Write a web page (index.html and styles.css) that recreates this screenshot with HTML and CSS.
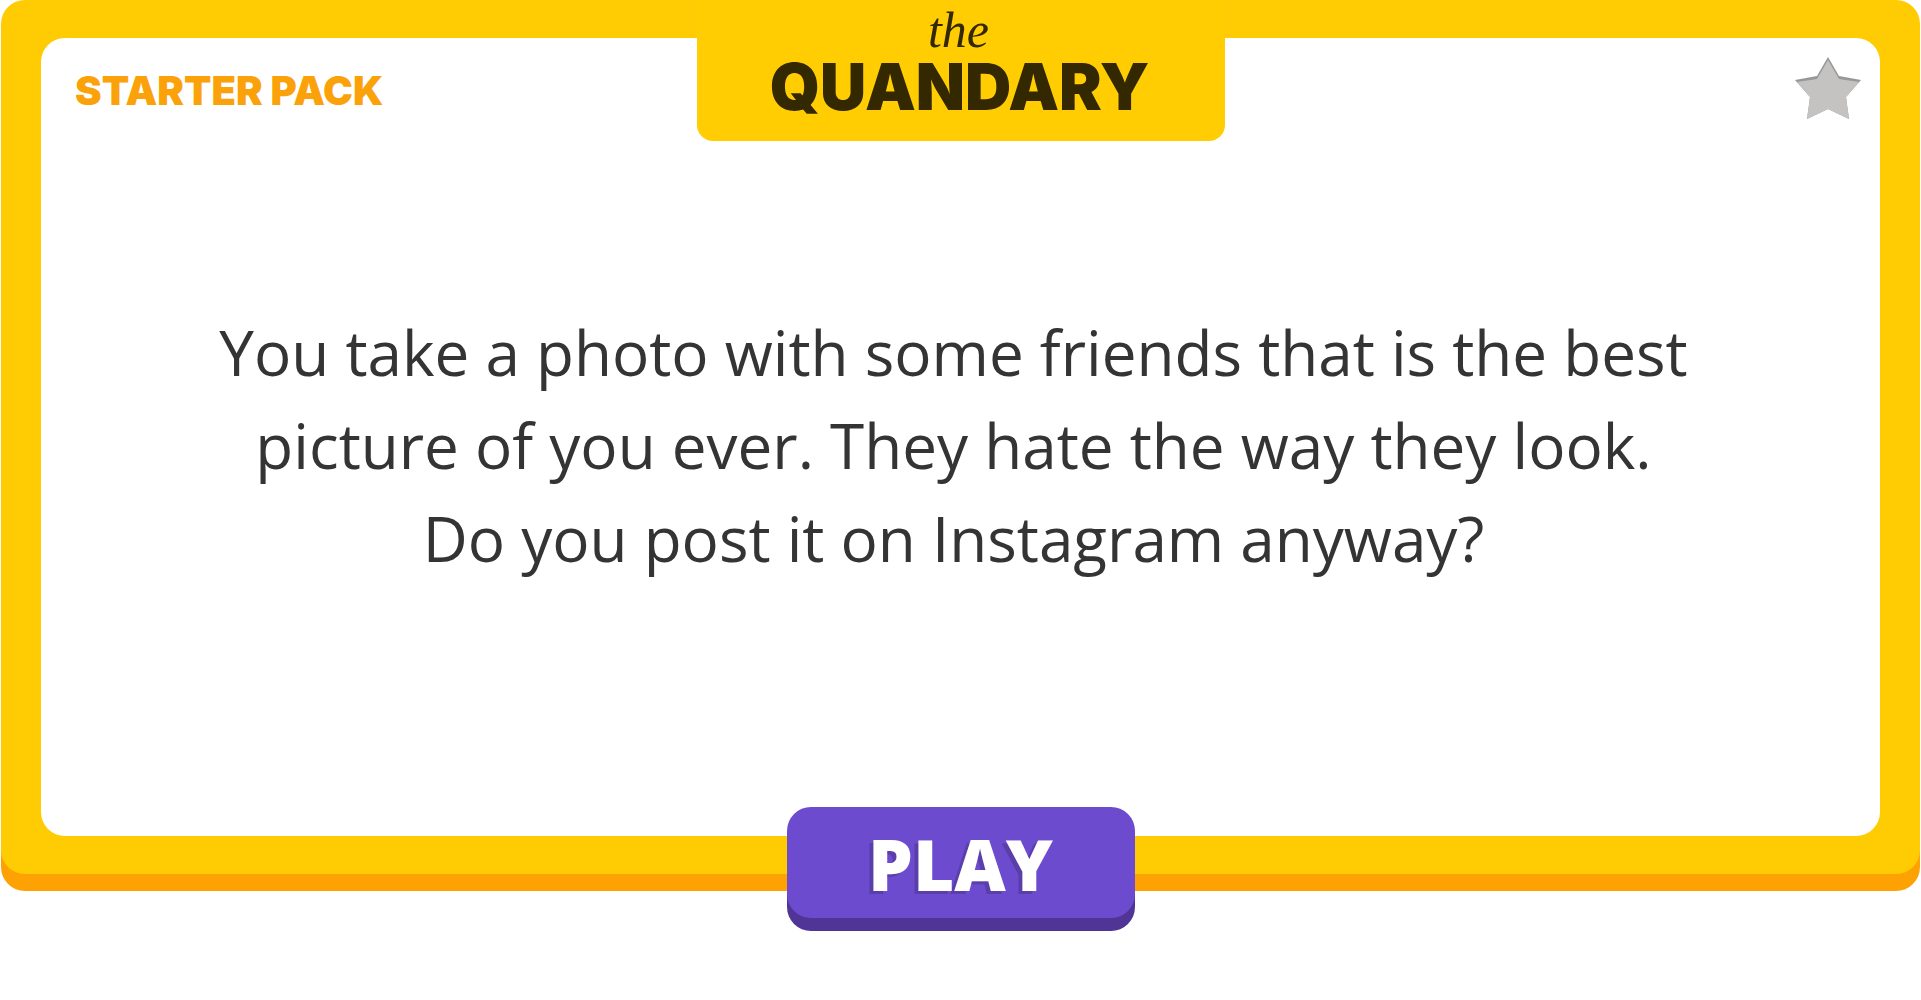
FILE: index.html
```html
<!DOCTYPE html>
<html lang="en">
<head>
<meta charset="utf-8">
<meta name="viewport" content="width=device-width, initial-scale=1">
<title>The Quandary</title>
<link rel="stylesheet" href="styles.css">
</head>
<body>
<main class="game">
  <article class="card">
    <div class="panel">
      <header class="top">
        <p class="pack">STARTER PACK</p>
        <h1 class="logo"><span class="logo-the">the</span><span class="logo-name">QUANDARY</span></h1>
        <button class="favourite" type="button" aria-label="Add to favourites">
          <svg class="star" viewBox="0 0 66 62" aria-hidden="true">
            <path class="star-shade" d="M33 0 44 19 66 23 51 40 54 62 33 52 12 62 15 40 0 23 22 19Z"/>
            <path class="star-face" d="M33 3 44 22 64 25 51 40 54 62 33 52 12 62 15 40 2 25 22 22Z"/>
          </svg>
        </button>
      </header>
      <p class="question">You take a photo with some friends that is the best<br>picture of you ever. They hate the way they look.<br>Do you post it on Instagram anyway?</p>
    </div>
  </article>
  <button class="play" type="button">PLAY</button>
</main>
</body>
</html>
```
FILE: styles.css
```css
* {
  box-sizing: border-box;
}

body {
  margin: 0;
  background: #fff;
}

.game {
  display: flex;
  flex-direction: column;
  padding: 0 1px;
}

.card {
  padding: 38px 40px;
  border-radius: 24px;
  background: #ffcb02;
  box-shadow: 0 17px #fda202;
}

.panel {
  display: flex;
  flex-direction: column;
  min-height: calc(100vh - 202px);
  border-radius: 24px;
  background: #fff;
}

.top {
  display: grid;
  grid-template-columns: 1fr 528px 1fr;
  align-items: start;
}

.pack {
  margin: 0;
  padding: 31px 0 0 34px;
  color: #fba20a;
  font: 900 40px/44px Inter, sans-serif;
}

.logo {
  display: flex;
  flex-direction: column;
  align-items: center;
  margin: -38px 0 0;
  padding: 4px 0 23px;
  border-radius: 0 0 16px 16px;
  background: #ffcd02;
  color: #332800;
}

.logo-the {
  padding-right: 4px;
  font: italic 400 50px/52px "Liberation Serif", serif;
}

.logo-name {
  padding-right: 2px;
  font: 900 64px/62px Inter, sans-serif;
}

.favourite {
  justify-self: end;
  margin: 19px 19px 0 0;
  padding: 0;
  border: 0;
  background: none;
  cursor: pointer;
}

.star {
  display: block;
  width: 66px;
  height: 62px;
}

.star-shade {
  fill: #989898;
}

.star-face {
  fill: #c4c3c1;
}

.question {
  margin: 0;
  padding: 165px 14px 0 0;
  color: #343434;
  font: 400 62px/93px "Open Sans", sans-serif;
  text-align: center;
}

.play {
  align-self: center;
  width: 348px;
  height: 111px;
  margin: -67px 0 16px;
  padding: 0;
  border: 0;
  border-radius: 24px;
  background: #6d4bcf;
  box-shadow: 0 13px #503596;
  color: #fff;
  font: 800 71px/113px "Open Sans", sans-serif;
  text-shadow: -4px 3px #5a3ea9;
  cursor: pointer;
}
```
